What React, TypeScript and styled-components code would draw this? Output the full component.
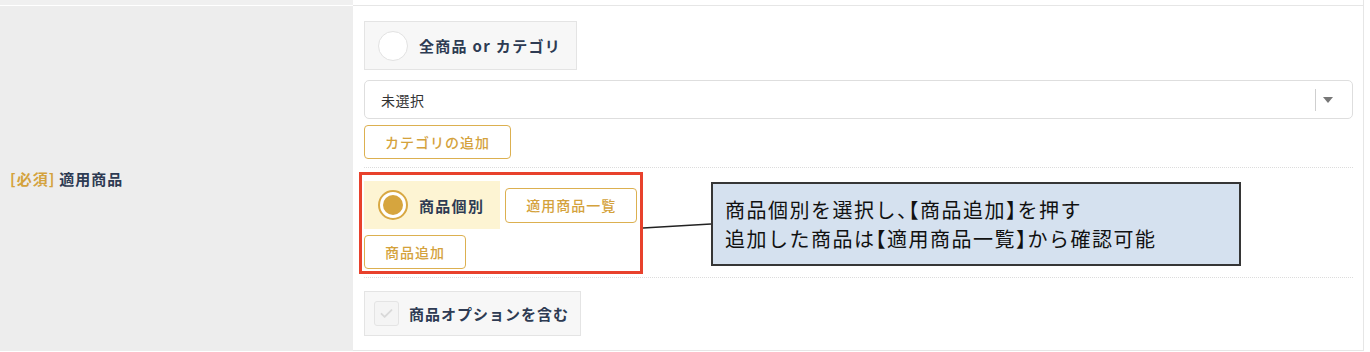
import React from "react";
import styled, { createGlobalStyle } from "styled-components";

const GlobalStyle = createGlobalStyle`
  html, body { margin: 0; padding: 0; background: #fff; }
  body { font-family: "Noto Sans CJK JP", "Noto Sans", sans-serif; }
  * { box-sizing: border-box; }
`;

const Page = styled.div`
  position: relative;
  width: 1370px;
  height: 352px;
  overflow: hidden;
  background: #fff;
`;

const Table = styled.div`
  width: 1364px;
  display: grid;
  grid-template-columns: 353px 1fr;
  grid-template-rows: 5px auto;
`;

const PrevLabel = styled.div`
  background: #f0f0f0;
`;

const PrevField = styled.div`
  background: #fff;
  border-right: 1px solid #e6e6e6;
`;

const LabelCell = styled.div`
  background: #ededed;
  border-top: 1px solid #fff;
  display: flex;
  align-items: center;
  padding-left: 10px;
  font-size: 15px;
  font-weight: 700;
  letter-spacing: 1px;
  color: #2e3b53;
`;

const Required = styled.span`
  color: #d4a23c;
  margin-right: 4px;
`;

const FieldCell = styled.div`
  border-top: 1px solid #e6e6e6;
  border-right: 1px solid #e6e6e6;
  border-bottom: 1px solid #e6e6e6;
  padding: 0 10px 0 11px;
`;

const Section = styled.div<{ $top: number; $bottom: number; $divider?: boolean }>`
  display: flex;
  flex-direction: column;
  align-items: flex-start;
  padding-top: ${(p) => p.$top}px;
  padding-bottom: ${(p) => p.$bottom}px;
  border-bottom: ${(p) => (p.$divider ? "1px dotted #dcdcdc" : "none")};
`;

const Row = styled.div<{ $gap?: number; $mt?: number }>`
  display: flex;
  align-items: center;
  gap: ${(p) => p.$gap ?? 0}px;
  margin-top: ${(p) => p.$mt ?? 0}px;
`;

const RadioBox = styled.label<{ $checked?: boolean }>`
  display: inline-flex;
  align-items: center;
  height: ${(p) => (p.$checked ? 48 : 49)}px;
  padding: 0 15px 0 13px;
  background: ${(p) => (p.$checked ? "#fdf4d3" : "#f7f7f7")};
  border: 1px solid ${(p) => (p.$checked ? "#fdf4d3" : "#e4e4e4")};
  font-size: 15px;
  font-weight: 700;
  letter-spacing: 1.3px;
  color: #2e3b53;
`;

const RadioCircle = styled.span<{ $checked?: boolean }>`
  width: 30px;
  height: 30px;
  border-radius: 50%;
  background: #fff;
  border: ${(p) => (p.$checked ? "2px solid #d8a843" : "1px solid #e2e2e2")};
  margin-right: 11px;
  display: flex;
  align-items: center;
  justify-content: center;
  flex: none;
  &::after {
    content: "";
    width: 20px;
    height: 20px;
    border-radius: 50%;
    background: #d6a53e;
    display: ${(p) => (p.$checked ? "block" : "none")};
  }
`;

const Select = styled.div`
  display: flex;
  align-items: center;
  align-self: stretch;
  height: 39px;
  margin-top: 10px;
  border: 1px solid #dedede;
  border-radius: 5px;
  padding-left: 16px;
  font-size: 14px;
  color: #333;
  letter-spacing: 0.5px;
`;

const SelectValue = styled.span`
  flex: 1;
`;

const SelectDivider = styled.span`
  width: 1px;
  height: 22px;
  background: #cfcfcf;
`;

const SelectArrow = styled.span`
  width: 0;
  height: 0;
  border-left: 5.5px solid transparent;
  border-right: 5.5px solid transparent;
  border-top: 6px solid #777;
  margin: 0 19px 0 7px;
`;

const GoldButton = styled.button<{ $mt?: number; $h?: number }>`
  height: ${(p) => p.$h ?? 34}px;
  padding: 0 20px;
  margin-top: ${(p) => p.$mt ?? 0}px;
  background: #fff;
  border: 1px solid #dcb050;
  border-radius: 4px;
  color: #d4a23c;
  font-family: inherit;
  font-size: 14px;
  font-weight: 500;
  letter-spacing: 1px;
  cursor: pointer;
`;

const CheckBox = styled.label`
  display: inline-flex;
  align-items: center;
  height: 45px;
  padding: 0 11px 0 9px;
  background: #f7f7f7;
  border: 1px solid #e4e4e4;
  font-size: 15px;
  font-weight: 700;
  letter-spacing: 1px;
  color: #2e3b53;
`;

const CheckSquare = styled.span`
  width: 25px;
  height: 25px;
  border: 1px solid #e4e4e4;
  border-radius: 3px;
  background: #f4f4f4;
  margin-right: 10px;
  display: flex;
  align-items: center;
  justify-content: center;
`;

const RedFrame = styled.div`
  position: absolute;
  left: 359px;
  top: 172px;
  width: 284px;
  height: 102px;
  border: 3px solid #e8412c;
  pointer-events: none;
`;

const Connector = styled.svg`
  position: absolute;
  left: 643px;
  top: 218px;
  overflow: visible;
`;

const Callout = styled.div`
  position: absolute;
  left: 711px;
  top: 182px;
  width: 530px;
  height: 84px;
  border: 2px solid #363636;
  background: #d5e1ef;
  padding: 11px 0 0 12px;
  font-size: 20px;
  line-height: 29px;
  letter-spacing: 1.5px;
  font-feature-settings: "halt";
  color: #111;
  white-space: nowrap;
`;

export default function App() {
  return (
    <Page>
      <GlobalStyle />
      <Table>
        <PrevLabel />
        <PrevField />
        <LabelCell>
          <Required>[必須]</Required>適用商品
        </LabelCell>
        <FieldCell>
          <Section $top={15} $bottom={8} $divider>
            <RadioBox>
              <RadioCircle />
              全商品 or カテゴリ
            </RadioBox>
            <Select>
              <SelectValue>未選択</SelectValue>
              <SelectDivider />
              <SelectArrow />
            </Select>
            <GoldButton $mt={6}>カテゴリの追加</GoldButton>
          </Section>
          <Section $top={13} $bottom={8} $divider>
            <Row $gap={5}>
              <RadioBox $checked>
                <RadioCircle $checked />
                商品個別
              </RadioBox>
              <GoldButton $h={35}>適用商品一覧</GoldButton>
            </Row>
            <GoldButton $mt={6}>商品追加</GoldButton>
          </Section>
          <Section $top={13} $bottom={14}>
            <CheckBox>
              <CheckSquare>
                <svg width="15" height="15" viewBox="0 0 24 24" fill="none">
                  <path d="M4 12.5l5 5L20 6.5" stroke="#d9d9d9" strokeWidth="3" strokeLinecap="round" strokeLinejoin="round" />
                </svg>
              </CheckSquare>
              商品オプションを含む
            </CheckBox>
          </Section>
        </FieldCell>
      </Table>
      <RedFrame />
      <Connector width="68" height="12" viewBox="0 0 68 12">
        <line x1="0" y1="10" x2="68" y2="6" stroke="#222" strokeWidth="1.4" />
      </Connector>
      <Callout>
        商品個別を選択し、【商品追加】を押す
        <br />
        追加した商品は【適用商品一覧】から確認可能
      </Callout>
    </Page>
  );
}
